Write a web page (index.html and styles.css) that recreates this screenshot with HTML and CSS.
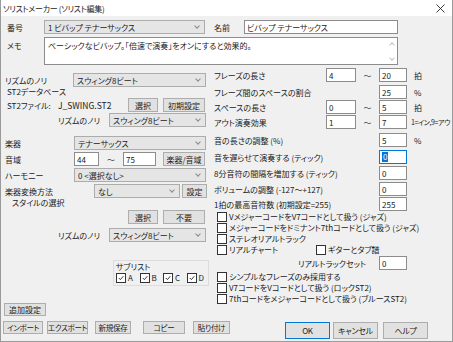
FILE: index.html
```html
<!DOCTYPE html>
<html lang="ja">
<head>
    <meta charset="UTF-8">
    <meta name="viewport" content="width=device-width, initial-scale=1.0">
    <title>ソリストメーカー (ソリスト編集)</title>
    <link rel="stylesheet" href="styles.css">
</head>
<body>

<div class="win">
    <div class="titlebar">
        <span class="title">ソリストメーカー (ソリスト編集)</span>
        <svg class="close" width="9" height="9" viewBox="0 0 9 9"><path d="M0.5 0.5L8.5 8.5M8.5 0.5L0.5 8.5" stroke="#222" stroke-width="0.9"/></svg>
    </div>

    <div class="row top">
        <span class="lbl" style="width:43px">番号</span>
        <div class="sel" style="width:161px">1 ビバップ テナーサックス</div>
        <span class="lbl name">名前</span>
        <div class="txt" style="width:154px">ビバップ テナーサックス</div>
    </div>

    <div class="row memo">
        <span class="lbl memo-lbl" style="width:43px">メモ</span>
        <div class="memo-box">
            <div class="memo-text">ベーシックなビバップ。「倍速で演奏」をオンにすると効果的。</div>
            <div class="vscroll"><i class="up"></i><i class="down"></i></div>
        </div>
    </div>

    <div class="cols">
        <div class="left">
            <div class="row r-rhythm">
                <span class="lbl pl5" style="width:72px">リズムのノリ</span>
                <div class="sel" style="width:133px">スウィング8ビート</div>
            </div>
            <div class="grp-title">ST2データベース</div>
            <div class="row">
                <span class="lbl pl6" style="width:57px">ST2ファイル:</span>
                <span class="lbl value" style="width:70px">J_SWING.ST2</span>
                <div class="btn" style="width:30px">選択</div>
                <div class="btn ml5" style="width:42px">初期設定</div>
            </div>
            <div class="row mt1">
                <span class="lbl" style="width:108px;padding-left:57px">リズムのノリ</span>
                <div class="sel" style="width:97px">スウィング8ビート</div>
            </div>

            <div class="row r-inst">
                <span class="lbl pl5" style="width:73px">楽器</span>
                <div class="sel" style="width:132px">テナーサックス</div>
            </div>
            <div class="row mt2">
                <span class="lbl pl5" style="width:73px">音域</span>
                <div class="txt" style="width:25px">44</div>
                <span class="tilde" style="width:24px">～</span>
                <div class="txt" style="width:33px">75</div>
                <div class="btn ml7" style="width:42px">楽器/音域</div>
            </div>
            <div class="row mt2">
                <span class="lbl pl5" style="width:73px">ハーモニー</span>
                <div class="sel" style="width:132px">0 &lt;選択なし&gt;</div>
            </div>
            <div class="row mt2">
                <span class="lbl pl5" style="width:93px">楽器変換方法</span>
                <div class="sel" style="width:86px">なし</div>
                <div class="btn ml2" style="width:25px">設定</div>
            </div>
            <div class="grp-title style-title">スタイルの選択</div>
            <div class="row mt1">
                <span style="width:127px"></span>
                <div class="btn" style="width:30px">選択</div>
                <div class="btn ml5" style="width:42px">不要</div>
            </div>
            <div class="row r-rhythm3">
                <span class="lbl" style="width:108px;padding-left:57px">リズムのノリ</span>
                <div class="sel" style="width:97px">スウィング8ビート</div>
            </div>

            <div class="sublist">
                <div class="sub-title">サブリスト</div>
                <div class="sub-checks">
                    <span class="chk on">A</span>
                    <span class="chk on">B</span>
                    <span class="chk on">C</span>
                    <span class="chk on">D</span>
                </div>
            </div>

            <div class="btn extra">追加設定</div>
        </div>

        <div class="right">
            <div class="row">
                <span class="lbl" style="width:112px">フレーズの長さ</span>
                <div class="txt" style="width:30px">4</div>
                <span class="tilde" style="width:23px">～</span>
                <div class="txt" style="width:28px">20</div>
                <span class="unit">拍</span>
            </div>
            <div class="row mt3">
                <span class="lbl" style="width:165px">フレーズ間のスペースの割合</span>
                <div class="txt" style="width:28px">25</div>
                <span class="unit">%</span>
            </div>
            <div class="row mt1">
                <span class="lbl" style="width:112px">スペースの長さ</span>
                <div class="txt" style="width:30px">0</div>
                <span class="tilde" style="width:23px">～</span>
                <div class="txt" style="width:28px">5</div>
                <span class="unit">拍</span>
            </div>
            <div class="row mt1">
                <span class="lbl" style="width:112px">アウト演奏効果</span>
                <div class="txt" style="width:30px">1</div>
                <span class="tilde" style="width:23px">～</span>
                <div class="txt" style="width:28px">7</div>
                <span class="unit range">1=イン,9=アウ</span>
            </div>

            <div class="row mt4">
                <span class="lbl" style="width:165px">音の長さの調整 (%)</span>
                <div class="txt" style="width:28px">5</div>
                <span class="unit">%</span>
            </div>
            <div class="row mt3">
                <span class="lbl" style="width:165px">音を遅らせて演奏する (ティック)</span>
                <div class="txt focus" style="width:28px"><span class="sel-text">0</span></div>
            </div>
            <div class="row mt2">
                <span class="lbl" style="width:165px">8分音符の間隔を増加する (ティック)</span>
                <div class="txt" style="width:28px">0</div>
            </div>
            <div class="row mt2">
                <span class="lbl" style="width:165px">ボリュームの調整 (-127～+127)</span>
                <div class="txt" style="width:28px">0</div>
            </div>
            <div class="row mt1">
                <span class="lbl" style="width:165px">1拍の最高音符数 (初期設定=255)</span>
                <div class="txt" style="width:28px">255</div>
            </div>

            <div class="crow"><span class="chk">VメジャーコードをV7コードとして扱う (ジャズ)</span></div>
            <div class="crow"><span class="chk">メジャーコードをドミナント7thコードとして扱う (ジャズ)</span></div>
            <div class="crow"><span class="chk">ステレオリアルトラック</span></div>
            <div class="crow">
                <span class="chk" style="width:99px">リアルチャート</span>
                <span class="chk">ギターとタブ譜</span>
            </div>
            <div class="row mt1">
                <span class="lbl" style="width:165px;padding-left:84px">リアルトラックセット</span>
                <div class="txt" style="width:28px">0</div>
            </div>
            <div class="crow mt1"><span class="chk">シンプルなフレーズのみ採用する</span></div>
            <div class="crow"><span class="chk">V7コードをVコードとして扱う (ロックST2)</span></div>
            <div class="crow"><span class="chk">7thコードをメジャーコードとして扱う (ブルースST2)</span></div>
        </div>
    </div>

    <div class="bottom">
        <div class="btn" style="width:40px">インポート</div>
        <div class="btn ml4" style="width:41px">エクスポート</div>
        <div class="btn ml7" style="width:36px">新規保存</div>
        <div class="btn" style="width:42px;margin-left:12px">コピー</div>
        <div class="btn" style="width:37px;margin-left:8px">貼り付け</div>
        <div class="btn big default" style="margin-left:55px">OK</div>
        <div class="btn big ml3">キャンセル</div>
        <div class="btn big ml5">ヘルプ</div>
    </div>
</div>

</body>
</html>
```

FILE: styles.css
```css
* {
    box-sizing: border-box;
}
body {
    margin: 0;
    font-family: "Noto Sans CJK JP", "Noto Sans", sans-serif;
    font-size: 8px;
    font-feature-settings: "palt";
    color: #1a1a1a;
    background: #f0f0f0;
}
.win {
    width: 453px;
    height: 342px;
    background: #f0f0f0;
    border: 1px solid #9a9a9a;
    border-top: none;
    overflow: hidden;
}
.titlebar {
    height: 16px;
    background: #fff;
    display: flex;
    align-items: center;
    justify-content: space-between;
    padding: 0 7px 0 2px;
}
.title {
    letter-spacing: -0.3px;
}
.row {
    display: flex;
    align-items: center;
    height: 14px;
    white-space: nowrap;
}
.lbl {
    flex: none;
    display: block;
}
.pl5 {
    padding-left: 4px;
}
.pl6 {
    padding-left: 6px;
}
.value {
    font-size: 8.5px;
}
.mt1 { margin-top: 1px; }
.mt2 { margin-top: 2px; }
.mt3 { margin-top: 3px; }
.mt4 { margin-top: 4px; }
.ml2 { margin-left: 2px; }
.ml3 { margin-left: 3px; }
.ml4 { margin-left: 4px; }
.ml5 { margin-left: 5px; }
.ml7 { margin-left: 7px; }

/* controls */
.sel {
    flex: none;
    height: 14px;
    background: #e5e5e5;
    border: 1px solid #acacac;
    padding-left: 3px;
    display: flex;
    align-items: center;
    position: relative;
}
.sel::after {
    content: "";
    position: absolute;
    right: 5px;
    top: 3px;
    width: 3px;
    height: 3px;
    border-right: 1px solid #8a8a8a;
    border-bottom: 1px solid #8a8a8a;
    transform: rotate(45deg);
}
.txt {
    flex: none;
    height: 14px;
    background: #fff;
    border: 1px solid #8c8c8c;
    padding-left: 2px;
    display: flex;
    align-items: center;
}
.txt.focus {
    border-color: #0078d7;
}
.sel-text {
    background: #0078d7;
    color: #fff;
    padding: 0 1px;
    line-height: 10px;
}
.btn {
    flex: none;
    height: 14px;
    background: #e1e1e1;
    border: 1px solid #adadad;
    display: flex;
    align-items: center;
    justify-content: center;
    white-space: nowrap;
}
.tilde {
    flex: none;
    text-align: center;
    color: #444;
}
.unit {
    padding-left: 7px;
}
.unit.range {
    padding-left: 4px;
    letter-spacing: -0.4px;
    font-size: 7px;
}

/* top part */
.top {
    margin-top: 4px;
}
.top .lbl {
    padding-left: 6px;
}
.top .lbl.name {
    width: 39px;
    padding-left: 9px;
}
.memo {
    margin-top: 3px;
    height: 28px;
    align-items: flex-start;
}
.memo .lbl {
    padding-left: 6px;
    padding-top: 3px;
}
.memo-box {
    width: 354px;
    height: 28px;
    background: #fff;
    border: 1px solid #8c8c8c;
    display: flex;
}
.memo-text {
    flex: 1;
    padding: 2px 3px;
}
.vscroll {
    width: 11px;
    display: flex;
    flex-direction: column;
    justify-content: space-between;
    align-items: center;
    padding: 5px 0 4px;
}
.vscroll i {
    width: 4px;
    height: 4px;
    border-left: 1px solid #c2c2c2;
    border-top: 1px solid #c2c2c2;
    transform: rotate(45deg);
}
.vscroll i.down {
    transform: rotate(225deg);
}

/* columns */
.cols {
    display: flex;
    margin-top: 3px;
    height: 248px;
}
.left {
    width: 208px;
    flex: none;
}
.right {
    margin-left: 5px;
    flex: 1;
    min-width: 0;
}
.r-rhythm {
    margin-top: 5px;
}
.grp-title {
    height: 11px;
    line-height: 9px;
    padding-left: 6px;
}
.style-title {
    padding-left: 11px;
    line-height: 10px;
}
.r-inst {
    margin-top: 9px;
}
.r-rhythm3 {
    margin-top: 4px;
}
.sublist {
    margin: 18px 0 0 112px;
    width: 96px;
    height: 26px;
    border: 1px solid #dcdcdc;
    padding: 1px 0 0 2px;
}
.sub-title {
    height: 10px;
    line-height: 10px;
}
.sub-checks {
    display: flex;
    height: 11px;
    align-items: center;
}
.sub-checks .chk {
    width: 23.5px;
}
.extra {
    margin: 17px 0 0 3px;
    width: 42px;
    height: 13px;
}

/* check boxes */
.crow {
    display: flex;
    align-items: center;
    height: 11px;
    padding-left: 3px;
    white-space: nowrap;
}
.chk {
    display: flex;
    align-items: center;
    flex: none;
}
.chk::before {
    content: "";
    width: 8px;
    height: 8px;
    border: 1px solid #333;
    background: #fff;
    margin-right: 2px;
    flex: none;
}
.chk.on::before {
    background: #fff url("data:image/svg+xml;utf8,<svg xmlns='http://www.w3.org/2000/svg' width='6' height='6' viewBox='0 0 6 6'><path d='M0.8 3L2.4 4.6L5.3 1.2' fill='none' stroke='%23222' stroke-width='0.9'/></svg>") center no-repeat;
}

/* bottom buttons */
.bottom {
    display: flex;
    align-items: flex-start;
    margin-top: 5px;
    padding-left: 2px;
}
.bottom .btn {
    height: 13px;
    font-size: 7.5px;
    letter-spacing: -0.3px;
}
.bottom .btn.big {
    height: 17px;
    width: 45px;
    margin-top: 1px;
    font-size: 8px;
}
.btn.default {
    border-color: #0078d7;
}
```
